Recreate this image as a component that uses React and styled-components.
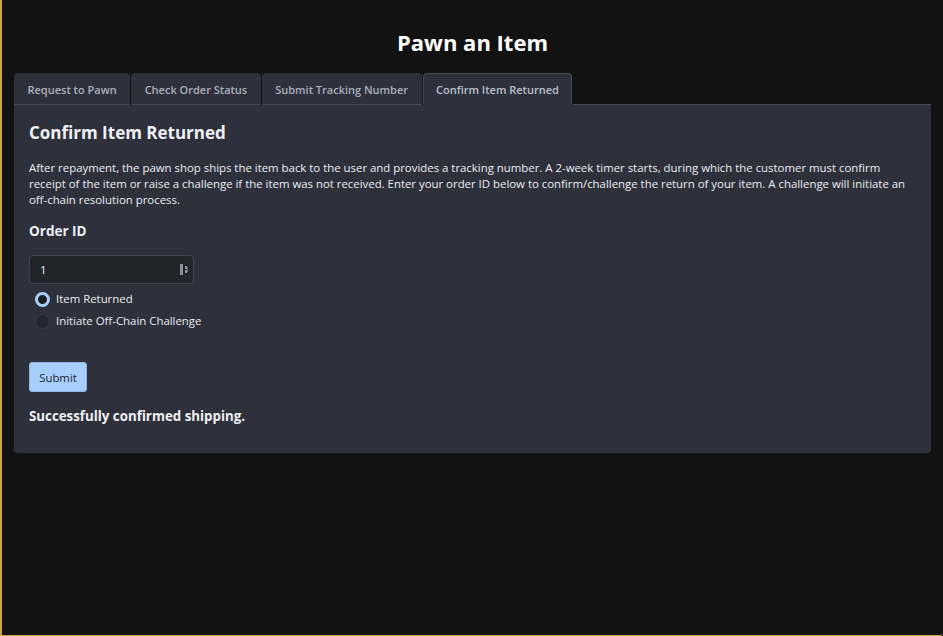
import React, { useState } from "react";
import styled, { createGlobalStyle } from "styled-components";

const Global = createGlobalStyle`
  html, body { margin: 0; padding: 0; background: #121212; }
  body {
    font-family: "Open Sans", "Noto Sans", sans-serif;
    color: #e8eaf0;
  }
  * { box-sizing: border-box; }
`;

const Frame = styled.div`
  height: 636px;
  background: #121212;
  border-left: 2px solid #c8a63c;
  border-bottom: 1px solid #c8a63c;
  border-bottom-right-radius: 4px;
  padding: 27px 12px 0 12px;
  display: flex;
  flex-direction: column;
`;

const Title = styled.h1`
  margin: 0 0 16px;
  text-align: center;
  font-size: 22px;
  font-weight: 700;
  line-height: 30px;
  color: #ffffff;
`;

const TabBar = styled.div`
  display: flex;
  align-items: flex-end;
  gap: 1px;
  height: 32px;
`;

const Tab = styled.button`
  font-family: inherit;
  font-size: 11px;
  font-weight: 600;
  height: 32px;
  padding: 0 12.5px;
  background: #2e313b;
  color: ${(p) => (p.$active ? "#b9c0cc" : "#aab0bc")};
  border: 1px solid ${(p) => (p.$active ? "#474b57" : "transparent")};
  border-bottom: 1px solid ${(p) => (p.$active ? "#2e313b" : "#474b57")};
  border-radius: 4px 4px 0 0;
  cursor: pointer;
  white-space: nowrap;
`;

const TabFill = styled.div`
  flex: 1;
  height: 1px;
  background: #474b57;
`;

const Panel = styled.div`
  background: #2e313b;
  border-radius: 0 0 4px 4px;
  padding: 16px 15px 28px;
`;

const Heading = styled.h2`
  margin: 0 0 15px;
  font-size: 17px;
  font-weight: 700;
  line-height: 24px;
  color: #eef0f5;
`;

const Para = styled.p`
  margin: 0 0 13px;
  font-size: 11.4px;
  line-height: 16px;
  color: #eceef3;
`;

const Label = styled.div`
  font-size: 13.5px;
  font-weight: 700;
  line-height: 20px;
  margin-bottom: 14px;
  color: #eef0f5;
`;

const InputWrap = styled.div`
  width: 165px;
  height: 29px;
  background: #22252c;
  border: 1px solid #434754;
  border-radius: 4px;
  display: flex;
  align-items: center;
  padding: 0 4px 0 10px;
  font-size: 11.4px;
  color: #e8eaf0;
`;

const InputText = styled.span`
  flex: 1;
`;

const RadioList = styled.div`
  display: flex;
  flex-direction: column;
  gap: 6px;
  margin-top: 7px;
  margin-bottom: 33px;
`;

const RadioRow = styled.label`
  display: flex;
  align-items: center;
  gap: 6px;
  padding-left: 6px;
  font-size: 11.4px;
  line-height: 16px;
  color: #e8eaf0;
  cursor: pointer;
`;

const Dot = styled.span`
  width: 15px;
  height: 15px;
  border-radius: 50%;
  background: ${(p) => (p.$checked ? "#1b1d22" : "#22252c")};
  border: ${(p) => (p.$checked ? "3px solid #a9cff8" : "1px solid #3a3e48")};
  flex: none;
`;

const Button = styled.button`
  font-family: inherit;
  font-size: 11.4px;
  height: 30px;
  width: 58px;
  padding: 0;
  background: #a6cffb;
  color: #23262e;
  border: 1px solid #8fb8e6;
  border-radius: 3px;
  cursor: pointer;
  margin-bottom: 15px;
`;

const Success = styled.div`
  font-size: 13.3px;
  font-weight: 700;
  line-height: 18px;
  color: #eef0f5;
`;

function Spinner() {
  return (
    <svg width="9" height="11" viewBox="0 0 9 11">
      <rect x="0" y="0" width="3" height="11" fill="#8c919c" />
      <rect x="5" y="2" width="2" height="3" fill="#8c919c" />
      <rect x="5" y="6" width="2" height="3" fill="#8c919c" />
      <rect x="7" y="3" width="1" height="5" fill="#6c707a" />
    </svg>
  );
}

const tabs = [
  "Request to Pawn",
  "Check Order Status",
  "Submit Tracking Number",
  "Confirm Item Returned",
];

export default function App() {
  const [active, setActive] = useState(3);
  const [choice, setChoice] = useState(0);
  return (
    <>
      <Global />
      <Frame>
        <Title>Pawn an Item</Title>
        <TabBar>
          {tabs.map((t, i) => (
            <Tab key={t} $active={i === active} onClick={() => setActive(i)}>
              {t}
            </Tab>
          ))}
          <TabFill />
        </TabBar>
        <Panel>
          <Heading>Confirm Item Returned</Heading>
          <Para>
            After repayment, the pawn shop ships the item back to the user and
            provides a tracking number. A 2-week timer starts, during which the
            customer must confirm receipt of the item or raise a challenge if
            the item was not received. Enter your order ID below to
            confirm/challenge the return of your item. A challenge will
            initiate an off-chain resolution process.
          </Para>
          <Label>Order ID</Label>
          <InputWrap>
            <InputText>1</InputText>
            <Spinner />
          </InputWrap>
          <RadioList>
            <RadioRow onClick={() => setChoice(0)}>
              <Dot $checked={choice === 0} />
              Item Returned
            </RadioRow>
            <RadioRow onClick={() => setChoice(1)}>
              <Dot $checked={choice === 1} />
              Initiate Off-Chain Challenge
            </RadioRow>
          </RadioList>
          <Button>Submit</Button>
          <Success>Successfully confirmed shipping.</Success>
        </Panel>
      </Frame>
    </>
  );
}
